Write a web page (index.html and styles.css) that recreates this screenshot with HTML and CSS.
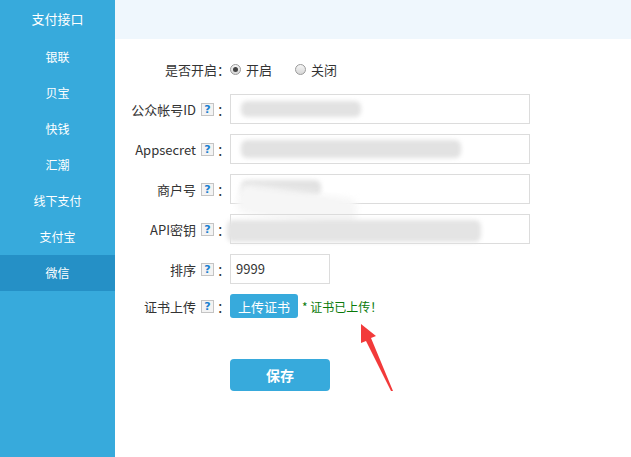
FILE: index.html
```html
<!DOCTYPE html>
<html lang="zh-CN">
<head>
  <meta charset="UTF-8" />
  <meta name="viewport" content="width=device-width, initial-scale=1.0"/>
  <title>支付接口</title>
  <link rel="stylesheet" href="styles.css">
</head>
<body>

  <aside class="sidebar">
    <div class="side-title">支付接口</div>
    <a class="side-item" href="#">银联</a>
    <a class="side-item" href="#">贝宝</a>
    <a class="side-item" href="#">快钱</a>
    <a class="side-item" href="#">汇潮</a>
    <a class="side-item" href="#">线下支付</a>
    <a class="side-item" href="#">支付宝</a>
    <a class="side-item active" href="#">微信</a>
  </aside>

  <main class="main">
    <div class="top-band"></div>

    <form class="form">
      <div class="row">
        <label class="label">是否开启：</label>
        <div class="radios">
          <span class="option"><span class="radio checked"></span>开启</span>
          <span class="option"><span class="radio"></span>关闭</span>
        </div>
      </div>

      <div class="row">
        <label class="label">公众帐号ID<span class="help">?</span>：</label>
        <div class="input">
          <span class="blur blur-id"></span>
        </div>
      </div>

      <div class="row">
        <label class="label">Appsecret<span class="help">?</span>：</label>
        <div class="input">
          <span class="blur blur-secret"></span>
        </div>
      </div>

      <div class="row">
        <label class="label">商户号<span class="help">?</span>：</label>
        <div class="input">
          <span class="blur blur-mch"></span>
          <span class="smear smear-mch"></span>
        </div>
      </div>

      <div class="row">
        <label class="label">API密钥<span class="help">?</span>：</label>
        <div class="input">
          <span class="blur blur-key"></span>
        </div>
      </div>

      <div class="row">
        <label class="label">排序<span class="help">?</span>：</label>
        <div class="input input-short">9999</div>
      </div>

      <div class="row row-upload">
        <label class="label">证书上传<span class="help">?</span>：</label>
        <button type="button" class="btn btn-upload">上传证书</button>
        <span class="uploaded">* 证书已上传！</span>
      </div>

      <div class="actions">
        <button type="button" class="btn btn-save">保存</button>
      </div>
    </form>

    <!-- annotation arrow drawn over the form -->
    <svg class="arrow" width="40" height="72" viewBox="0 0 40 72">
      <polygon points="1,0 16,12 11,14 33,67 31,67 6,17 1,19" fill="#f23a3a"/>
    </svg>
  </main>

</body>
</html>
```

FILE: styles.css
```css
* {
  box-sizing: border-box;
  margin: 0;
  padding: 0;
}

body {
  font-family: "Noto Sans CJK SC", "Liberation Sans", sans-serif;
  font-size: 13px;
  color: #333;
  background: #fff;
  display: flex;
  min-height: 100vh;
}

.sidebar {
  width: 115px;
  flex-shrink: 0;
  background: #37aadc;
  display: flex;
  flex-direction: column;
}

.side-title {
  height: 39px;
  line-height: 38px;
  text-align: center;
  color: #fff;
  font-size: 13px;
}

.side-item {
  display: block;
  height: 36px;
  line-height: 36px;
  text-align: center;
  color: #fff;
  font-size: 12px;
  text-decoration: none;
}

.side-item.active {
  background: #2590c6;
}

.main {
  flex: 1;
  position: relative;
}

.top-band {
  height: 39px;
  background: #eff7fd;
}

.form {
  padding-top: 15px;
}

.row {
  display: flex;
  align-items: center;
  height: 30px;
  margin-bottom: 10px;
}

.label {
  width: 115px;
  flex-shrink: 0;
  text-align: right;
  white-space: nowrap;
  color: #333;
  display: flex;
  align-items: center;
  justify-content: flex-end;
}

.help {
  display: inline-flex;
  align-items: center;
  justify-content: center;
  width: 13px;
  height: 13px;
  margin: 0 3px 0 5px;
  border: 1px solid #c4c4c4;
  background: #f3f3f3;
  color: #1a7fd0;
  font-family: "DejaVu Sans", sans-serif;
  font-weight: bold;
  font-size: 11px;
  line-height: 1;
}

.radios {
  display: flex;
  align-items: center;
}

.option {
  display: flex;
  align-items: center;
  width: 65px;
  color: #333;
}

.radio {
  width: 11px;
  height: 11px;
  border-radius: 50%;
  border: 1px solid #9a9a9a;
  background: linear-gradient(#f6f6f6, #d6d6d6);
  margin-right: 5px;
  display: flex;
  align-items: center;
  justify-content: center;
}

.radio.checked::after {
  content: "";
  width: 5px;
  height: 5px;
  border-radius: 50%;
  background: #444;
}

.input {
  width: 300px;
  height: 30px;
  border: 1px solid #dcdcdc;
  padding: 0 5px;
  line-height: 28px;
  position: relative;
  color: #333;
}

.input-short {
  width: 100px;
}

/* masked values */
.blur {
  position: absolute;
  background: #e2e2e2;
  filter: blur(2px);
  border-radius: 6px;
}

.blur-id {
  left: 10px;
  top: 6px;
  width: 120px;
  height: 16px;
}

.blur-secret {
  left: 10px;
  top: 5px;
  width: 220px;
  height: 18px;
}

.blur-mch {
  left: 10px;
  top: 5px;
  width: 80px;
  height: 17px;
}

.smear {
  position: absolute;
  background: #f6f6f6;
  filter: blur(3px);
  border-radius: 10px;
}

.smear-mch {
  left: 6px;
  top: 16px;
  width: 120px;
  height: 30px;
  transform: rotate(8deg);
}

.blur-key {
  left: -4px;
  top: 5px;
  width: 254px;
  height: 22px;
  background: #e4e4e4;
}

.btn {
  border: none;
  color: #fff;
  background: #37aadc;
  font-family: inherit;
  cursor: pointer;
}

.row-upload {
  height: 24px;
}

.btn-upload {
  width: 68px;
  height: 24px;
  border-radius: 3px;
  font-size: 13px;
}

.uploaded {
  margin-left: 4px;
  color: #0a7a0a;
  font-size: 12px;
}

.actions {
  padding-left: 115px;
  margin-top: 41px;
}

.btn-save {
  width: 100px;
  height: 32px;
  border-radius: 4px;
  font-size: 14px;
  font-weight: bold;
}

.arrow {
  position: absolute;
  left: 245px;
  top: 324px;
}
```
